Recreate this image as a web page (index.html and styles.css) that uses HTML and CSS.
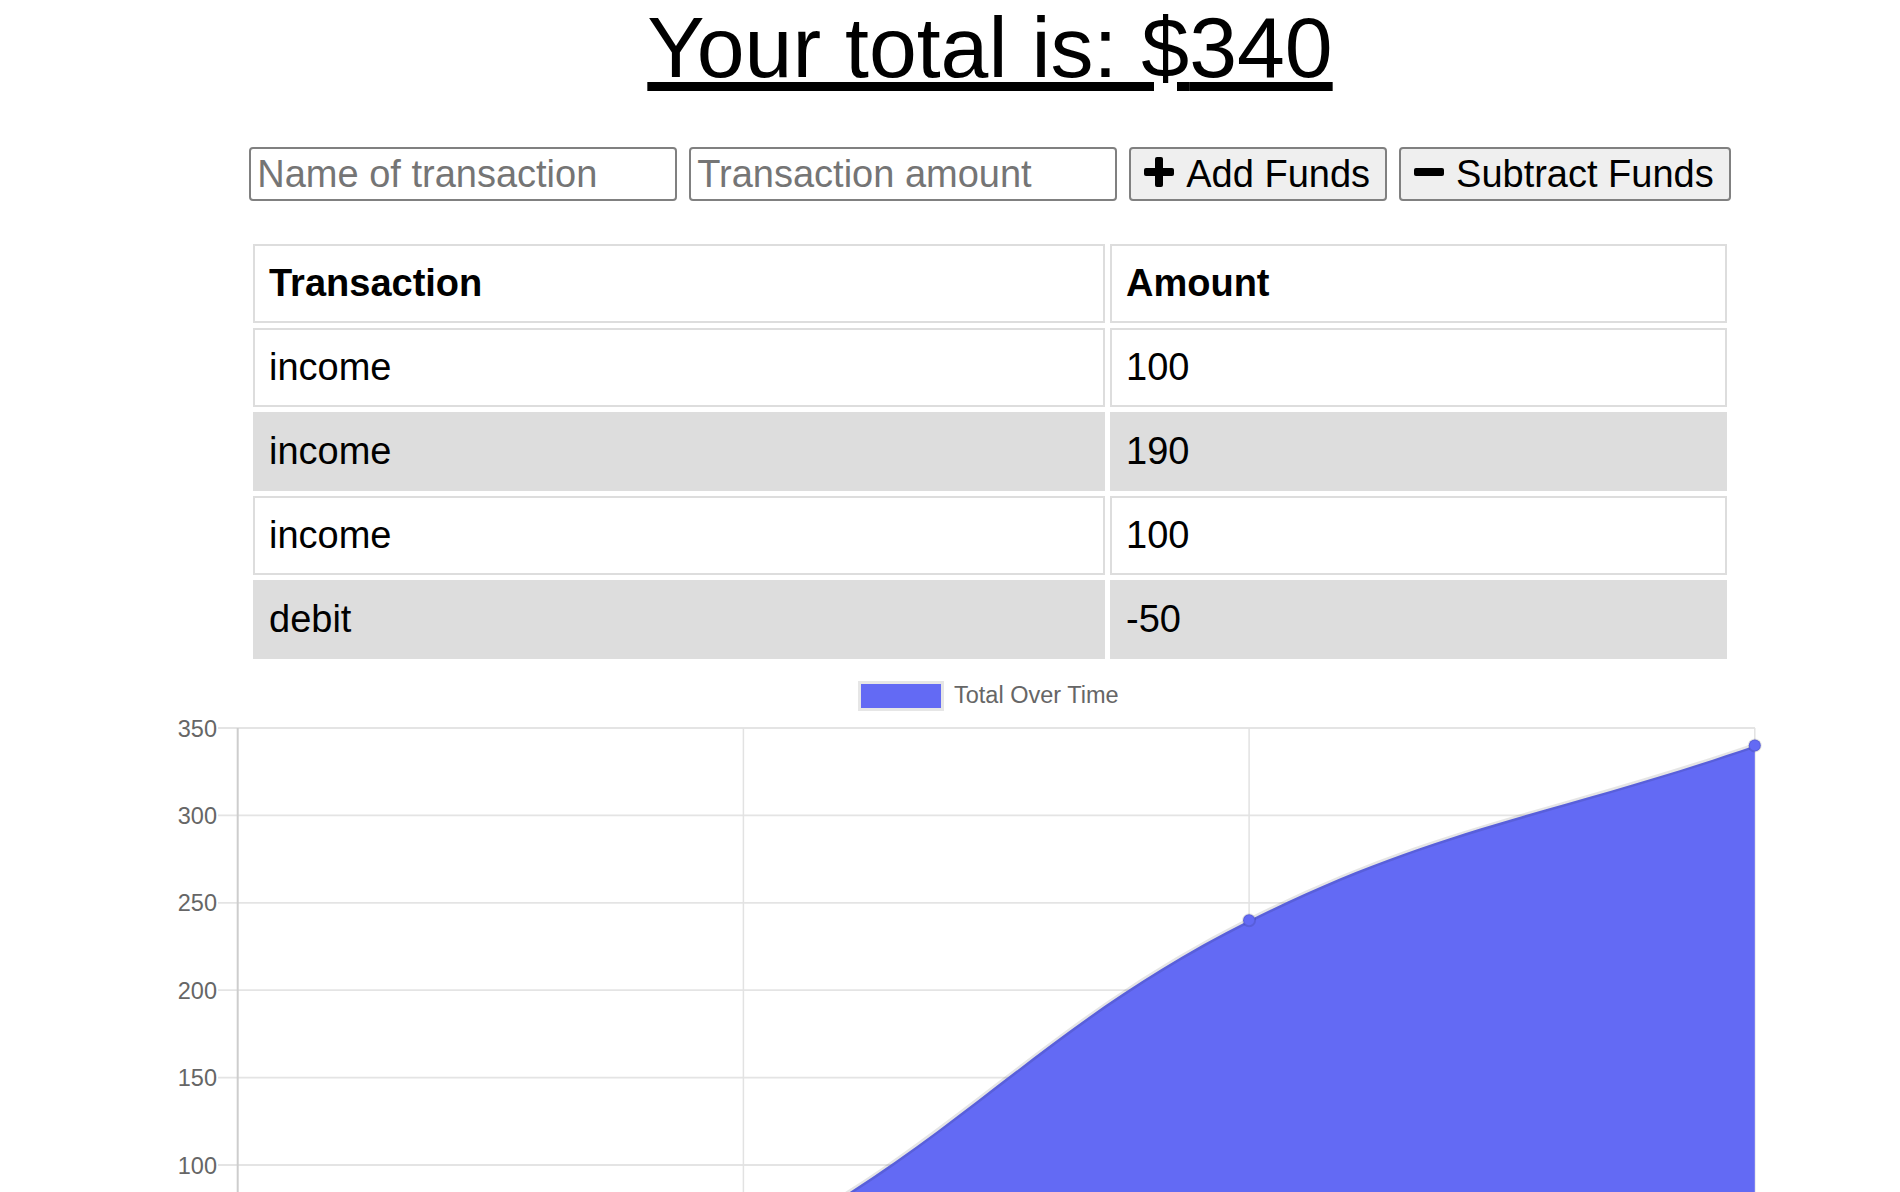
FILE: index.html
```html
<!DOCTYPE html>
<html lang="en">
<head>
<meta charset="utf-8">
<title>Budget Tracker</title>
<link rel="stylesheet" href="styles.css">
</head>
<body>
<div class="page">
  <h1 class="total">Your total is: $<span>340</span></h1>

  <form class="entry">
    <input class="field" type="text" placeholder="Name of transaction">
    <input class="field" type="number" placeholder="Transaction amount">
    <button class="btn" type="button">
      <svg class="ico" viewBox="0 0 30 30" width="30" height="30" aria-hidden="true">
        <rect x="0" y="11" width="30" height="8" rx="2"/>
        <rect x="11" y="0" width="8" height="30" rx="2"/>
      </svg>
      <span>Add Funds</span>
    </button>
    <button class="btn" type="button">
      <svg class="ico" viewBox="0 0 30 30" width="30" height="30" aria-hidden="true">
        <rect x="0" y="11" width="30" height="8" rx="2"/>
      </svg>
      <span>Subtract Funds</span>
    </button>
  </form>

  <table class="txns">
    <thead>
      <tr><th class="col-name">Transaction</th><th>Amount</th></tr>
    </thead>
    <tbody>
      <tr><td>income</td><td>100</td></tr>
      <tr><td>income</td><td>190</td></tr>
      <tr><td>income</td><td>100</td></tr>
      <tr><td>debit</td><td>-50</td></tr>
    </tbody>
  </table>

  <div class="chart">
    <svg class="chart-svg" viewBox="170 664 1640 528" width="1640" height="528">
      <g class="grid">
        <line x1="218" y1="728" x2="1755" y2="728"/>
        <line x1="218" y1="815.4" x2="1755" y2="815.4"/>
        <line x1="218" y1="902.8" x2="1755" y2="902.8"/>
        <line x1="218" y1="990.2" x2="1755" y2="990.2"/>
        <line x1="218" y1="1077.6" x2="1755" y2="1077.6"/>
        <line x1="218" y1="1165" x2="1755" y2="1165"/>
        <line x1="218" y1="1252.4" x2="1755" y2="1252.4"/>
        <line class="vgrid" x1="743.4" y1="728" x2="743.4" y2="1200"/>
        <line class="vgrid" x1="1249.1" y1="728" x2="1249.1" y2="1200"/>
        <line class="vgrid" x1="1754.8" y1="728" x2="1754.8" y2="1200"/>
      </g>
      <line class="axis" x1="237.7" y1="728" x2="237.7" y2="1200"/>
      <path class="area" d="M237.7,1427.2 C440.0,1357.3 553.6,1347.5 743.4,1252.4 C958.1,1144.8 1034.4,1027.9 1249.1,920.3 C1438.9,825.2 1552.5,815.4 1754.8,745.5 L1754.8,1400 L237.7,1400 Z"/>
      <path class="line" d="M237.7,1427.2 C440.0,1357.3 553.6,1347.5 743.4,1252.4 C958.1,1144.8 1034.4,1027.9 1249.1,920.3 C1438.9,825.2 1552.5,815.4 1754.8,745.5"/>
      <circle class="pt" cx="1249.1" cy="920.3" r="6"/>
      <circle class="pt" cx="1754.8" cy="745.5" r="6"/>
      <g class="ticks">
        <text x="217" y="736.5">350</text>
        <text x="217" y="823.9">300</text>
        <text x="217" y="911.3">250</text>
        <text x="217" y="998.7">200</text>
        <text x="217" y="1086.1">150</text>
        <text x="217" y="1173.5">100</text>
      </g>
      <rect class="legend-box" x="859.5" y="682.5" width="83" height="27"/>
      <text class="legend-text" x="954" y="703">Total Over Time</text>
    </svg>
  </div>
</div>
</body>
</html>
```

FILE: styles.css
```css
html, body {
  margin: 0;
  padding: 0;
  overflow: hidden;
  background: #fff;
}

body {
  font-family: "Liberation Sans", Arial, Helvetica, sans-serif;
  color: #000;
}

.page {
  padding-left: 80px;
}

.total {
  margin: 2px 0 0;
  text-align: center;
  font-size: 86px;
  font-weight: normal;
  line-height: 90px;
  text-decoration: underline;
  text-decoration-thickness: 9px;
  text-underline-offset: 5px;
}

.entry {
  display: flex;
  justify-content: center;
  gap: 12px;
  margin: 55px 0 0;
}

.field {
  box-sizing: border-box;
  width: 428px;
  height: 54px;
  margin: 0;
  padding: 0 6px;
  border: 2px solid #808080;
  border-radius: 4px;
  font-family: "Liberation Sans", Arial, sans-serif;
  font-size: 38px;
  color: #000;
  background: #fff;
}

.field::placeholder {
  color: #757575;
}

.btn {
  box-sizing: border-box;
  display: inline-flex;
  align-items: center;
  gap: 12px;
  height: 54px;
  margin: 0;
  padding: 0 15px 0 13px;
  border: 2px solid #808080;
  border-radius: 4px;
  background: #efefef;
  font-family: "Liberation Sans", Arial, sans-serif;
  font-size: 38px;
  color: #000;
  white-space: nowrap;
}

.ico {
  display: block;
  flex: none;
  fill: #000;
  margin-bottom: 5px;
}

.txns {
  width: 1484px;
  margin: 38px auto 0;
  border-collapse: separate;
  border-spacing: 5px;
  table-layout: fixed;
}

.txns th,
.txns td {
  box-sizing: border-box;
  border: 2px solid #ddd;
  padding: 16px 14px;
  font-size: 38px;
  line-height: 43px;
  text-align: left;
}

.txns th {
  font-weight: bold;
}

.txns .col-name {
  width: 852px;
}

.txns tbody tr:nth-child(even) td {
  background: #ddd;
}

.chart {
  display: flex;
  justify-content: center;
}

.chart-svg {
  display: block;
  font-family: "Liberation Sans", Arial, Helvetica, sans-serif;
}

.grid line {
  stroke: #e4e4e4;
  stroke-width: 1.8;
}

.grid .vgrid {
  stroke: #e2e2e2;
  stroke-width: 1.5;
}

.axis {
  stroke: #cdcdcd;
  stroke-width: 2;
}

.area {
  fill: #636af4;
}

.line {
  fill: none;
  stroke: rgba(0, 0, 0, 0.1);
  stroke-width: 5;
}

.pt {
  fill: #636af4;
  stroke: rgba(0, 0, 0, 0.1);
  stroke-width: 2;
}

.ticks text {
  font-size: 23.5px;
  fill: #666;
  text-anchor: end;
}

.legend-box {
  fill: #636af4;
  stroke: #e6e6e6;
  stroke-width: 3;
}

.legend-text {
  font-size: 23.5px;
  fill: #666;
}
```
